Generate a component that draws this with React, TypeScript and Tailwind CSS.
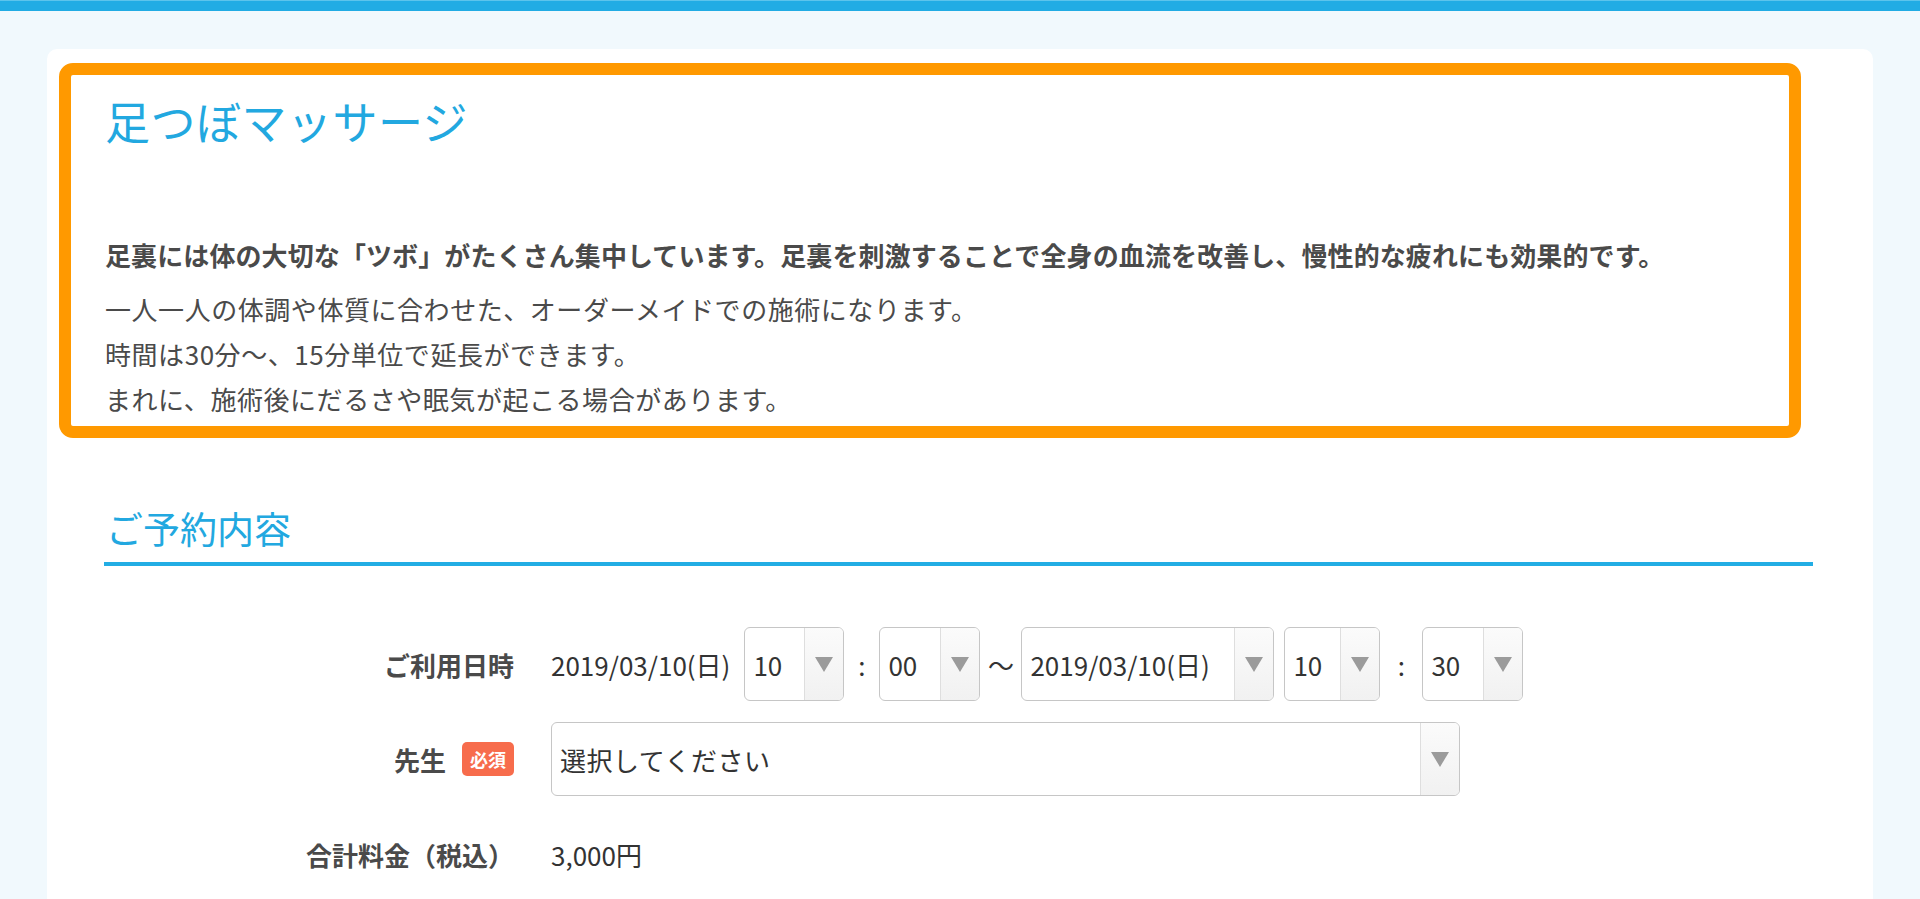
import React from "react";

function Arrow() {
  return (
    <svg width="20" height="16" viewBox="0 0 20 16" aria-hidden="true">
      <polygon points="1,1 19,1 10,16" fill="#9b9b9b" />
    </svg>
  );
}

function Select({ value, width }: { value: string; width: string }) {
  return (
    <div className={`${width} h-[74px] flex shrink-0 rounded-[6px] border border-[#c6c6c6] bg-white overflow-hidden`}>
      <div className="flex-1 flex items-center pl-[8px] text-[26px] text-[#333] whitespace-nowrap">{value}</div>
      <div className="w-[39px] flex items-center justify-center border-l border-[#dedede] bg-gradient-to-b from-[#fbfbfb] to-[#f1f1f1]">
        <Arrow />
      </div>
    </div>
  );
}

export default function App() {
  return (
    <div className="min-h-screen bg-[#f1f9fd] font-['Noto_Sans_CJK_JP','Noto_Sans',sans-serif] text-[#4a4a4a]">
      <div className="h-[11px] bg-[#21ace4] border-t border-[#5cc4ec]" />
      <div className="px-[47px] pt-[38px]">
        <div className="bg-white rounded-[10px] pt-[14px] pb-[200px]">
          <div className="ml-[12px] w-[1742px] border-[12px] border-[#ff9900] rounded-[14px] pl-[34px] pt-[19px] pb-[5px]">
            <h1 className="text-[45px] leading-[54px] text-[#22a8e0] font-normal tracking-[0.5px]">足つぼマッサージ</h1>
            <p className="mt-[84px] text-[26px] leading-[45px] font-bold text-[#4a4a4a] tracking-[0.1px]">
              足裏には体の大切な「ツボ」がたくさん集中しています。足裏を刺激することで全身の血流を改善し、慢性的な疲れにも効果的です。
            </p>
            <div className="mt-[9px] text-[26px] leading-[45px] text-[#4a4a4a] tracking-[0.55px]">
              <p>一人一人の体調や体質に合わせた、オーダーメイドでの施術になります。</p>
              <p>時間は30分〜、15分単位で延長ができます。</p>
              <p>まれに、施術後にだるさや眠気が起こる場合があります。</p>
            </div>
          </div>

          <div className="pl-[57px] pr-[60px]">
            <h2 className="mt-[68px] text-[37px] leading-[44px] text-[#22a8e0] font-normal pb-[12px] border-b-4 border-[#22ade4] pl-[2px]">
              ご予約内容
            </h2>

            <div className="mt-[61px] flex flex-col gap-[21px]">
              <div className="flex items-center h-[74px]">
                <div className="w-[410px] flex justify-end text-[26px] font-bold">ご利用日時</div>
                <div className="ml-[37px] flex items-center text-[26px] text-[#333]">
                  <span className="whitespace-nowrap">2019/03/10(日)</span>
                  <div className="ml-[14px]">
                    <Select value="10" width="w-[100px]" />
                  </div>
                  <span className="w-[35px] text-center">:</span>
                  <Select value="00" width="w-[101px]" />
                  <span className="w-[41px] text-center">～</span>
                  <Select value="2019/03/10(日)" width="w-[253px]" />
                  <div className="ml-[10px]">
                    <Select value="10" width="w-[96px]" />
                  </div>
                  <span className="w-[42px] text-center">:</span>
                  <Select value="30" width="w-[101px]" />
                </div>
              </div>

              <div className="flex items-center h-[74px]">
                <div className="w-[410px] flex justify-end items-center">
                  <span className="text-[26px] font-bold">先生</span>
                  <span className="ml-[16px] h-[34px] px-[8px] rounded-[5px] bg-[#f76c4c] text-white text-[18px] font-bold leading-[34px]">必須</span>
                </div>
                <div className="ml-[37px]">
                  <div className="w-[909px] h-[74px] flex rounded-[6px] border border-[#c6c6c6] bg-white overflow-hidden">
                    <div className="flex-1 flex items-center pl-[8px] text-[26px] text-[#333] tracking-[0.5px]">選択してください</div>
                    <div className="w-[39px] flex items-center justify-center border-l border-[#dedede] bg-gradient-to-b from-[#fbfbfb] to-[#f1f1f1]">
                      <Arrow />
                    </div>
                  </div>
                </div>
              </div>

              <div className="flex items-center h-[74px]">
                <div className="w-[410px] flex justify-end text-[26px] font-bold">合計料金（税込）</div>
                <div className="ml-[37px] text-[26px] text-[#333]">3,000円</div>
              </div>
            </div>
          </div>
        </div>
      </div>
    </div>
  );
}
